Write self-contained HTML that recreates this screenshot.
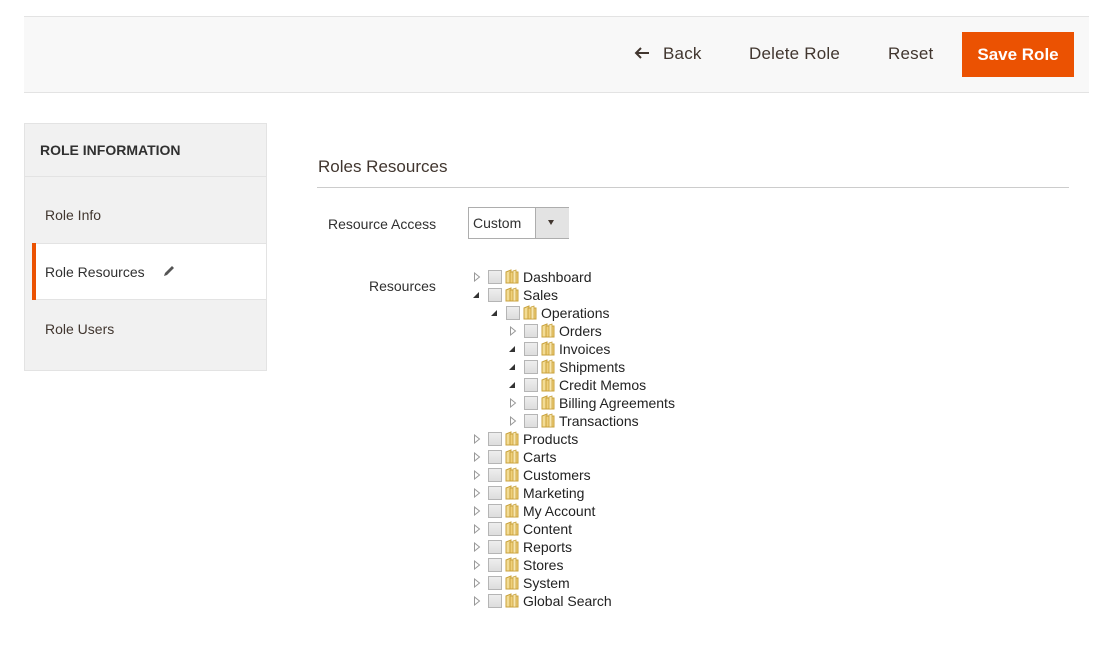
<!DOCTYPE html>
<html><head><style>
body{margin:0;width:1100px;height:662px;background:#fff;font-family:"Liberation Sans",sans-serif;color:#303030;position:relative;overflow:hidden}
.a{position:absolute}
.hdr{left:24px;top:16px;width:1065px;height:75px;background:#f8f8f8;border-top:1px solid #e3e3e3;border-bottom:1px solid #e3e3e3}
.btn{font-size:17px;color:#41362f;top:44px;letter-spacing:0.2px}
.side{left:24px;top:123px;width:241px;height:246px;background:#f1f1f1;border:1px solid #e3e3e3}
.row{position:absolute;height:18px;font-size:14px;line-height:18px;color:#222;white-space:nowrap}
.tri{position:absolute}
.cb{position:absolute;left:12px;top:2px;width:12px;height:12px;border:1px solid #b5b5b5;background:linear-gradient(#eee,#ddd)}
.fd{position:absolute;left:29px;top:1px;width:14px;height:15px}
.tx{position:absolute;left:47px;top:0}
</style></head><body>
<div class="a hdr"></div>
<svg class="a" style="left:634px;top:46px" width="16" height="14" viewBox="0 0 16 14"><path d="M15 7 H2 M7 2 L2 7 L7 12" fill="none" stroke="#41362f" stroke-width="2"/></svg>
<div class="a btn" style="left:663px">Back</div>
<div class="a btn" style="left:749px">Delete Role</div>
<div class="a btn" style="left:888px">Reset</div>
<div class="a" style="left:962px;top:32px;width:112px;height:45px;background:#eb5202;color:#fff;font-size:17px;font-weight:bold;line-height:45px;text-align:center">Save Role</div>

<div class="a side"></div>
<div class="a" style="left:40px;top:142px;font-size:14px;font-weight:bold;color:#303030">ROLE INFORMATION</div>
<div class="a" style="left:25px;top:176px;width:241px;height:1px;background:#e3e3e3"></div>
<div class="a" style="left:45px;top:207px;font-size:14px;color:#41362f">Role Info</div>
<div class="a" style="left:32px;top:243px;width:234px;height:57px;background:#fff;border-top:1px solid #e3e3e3;border-bottom:1px solid #e3e3e3;box-sizing:border-box"></div>
<div class="a" style="left:32px;top:243px;width:4px;height:57px;background:#eb5202"></div>
<div class="a" style="left:45px;top:264px;font-size:14px;color:#303030">Role Resources</div>
<svg class="a" style="left:162px;top:264px" width="14" height="14" viewBox="0 0 14 14"><path d="M2 12 L3 9 L10 2 L12 4 L5 11 Z" fill="#555"/></svg>
<div class="a" style="left:45px;top:321px;font-size:14px;color:#41362f">Role Users</div>

<div class="a" style="left:318px;top:157px;font-size:17px;color:#41362f">Roles Resources</div>
<div class="a" style="left:317px;top:187px;width:752px;height:1px;background:#ccc"></div>
<div class="a" style="left:328px;top:216px;font-size:14px;color:#303030">Resource Access</div>
<div class="a" style="left:468px;top:207px;width:99px;height:30px;border:1px solid #adadad;background:#fff"></div>
<div class="a" style="left:535px;top:208px;width:33px;height:30px;background:#e3e3e3;border-left:1px solid #adadad"></div>
<div class="a" style="left:548px;top:220px;border-top:5px solid #41362f;border-left:3.5px solid transparent;border-right:3.5px solid transparent"></div>
<div class="a" style="left:473px;top:215px;font-size:14px;color:#303030">Custom</div>
<div class="a" style="left:369px;top:278px;font-size:14px;color:#303030">Resources</div>

<div id="tree"></div>
<script>
var items=[[0,'c','Dashboard'],[0,'o','Sales'],[1,'o','Operations'],[2,'c','Orders'],[2,'o','Invoices'],[2,'o','Shipments'],[2,'o','Credit Memos'],[2,'c','Billing Agreements'],[2,'c','Transactions'],[0,'c','Products'],[0,'c','Carts'],[0,'c','Customers'],[0,'c','Marketing'],[0,'c','My Account'],[0,'c','Content'],[0,'c','Reports'],[0,'c','Stores'],[0,'c','System'],[0,'c','Global Search']];
var fold='<svg class="fd" viewBox="0 0 14 15"><path d="M1 3 L6 1 L6 14 L1 14 Z" fill="#f3dc95" stroke="#c9a23c"/><path d="M5 3 L13 3 L13 14 L5 14 Z" fill="#efcf7a" stroke="#c9a23c"/><path d="M8 2 L11 1 L11 14 L8 14 Z" fill="#f7e6b0" stroke="#c9a23c" stroke-width="0.8"/></svg>';
var h='';items.forEach(function(it,i){var x=476+it[0]*18,y=268+i*18;
var t=it[1]=='c'?'<svg class="tri" style="left:-3px;top:4px" width="8" height="10"><path d="M1.5 1 L6.5 5 L1.5 9 Z" fill="#fff" stroke="#999"/></svg>':'<svg class="tri" style="left:-4px;top:5px" width="8" height="8"><path d="M7 1 L7 7 L1 7 Z" fill="#333"/></svg>';
h+='<div class="row" style="left:'+x+'px;top:'+y+'px">'+t+'<div class="cb"></div>'+fold+'<div class="tx">'+it[2]+'</div></div>';});
document.getElementById('tree').innerHTML=h;
</script>
</body></html>
